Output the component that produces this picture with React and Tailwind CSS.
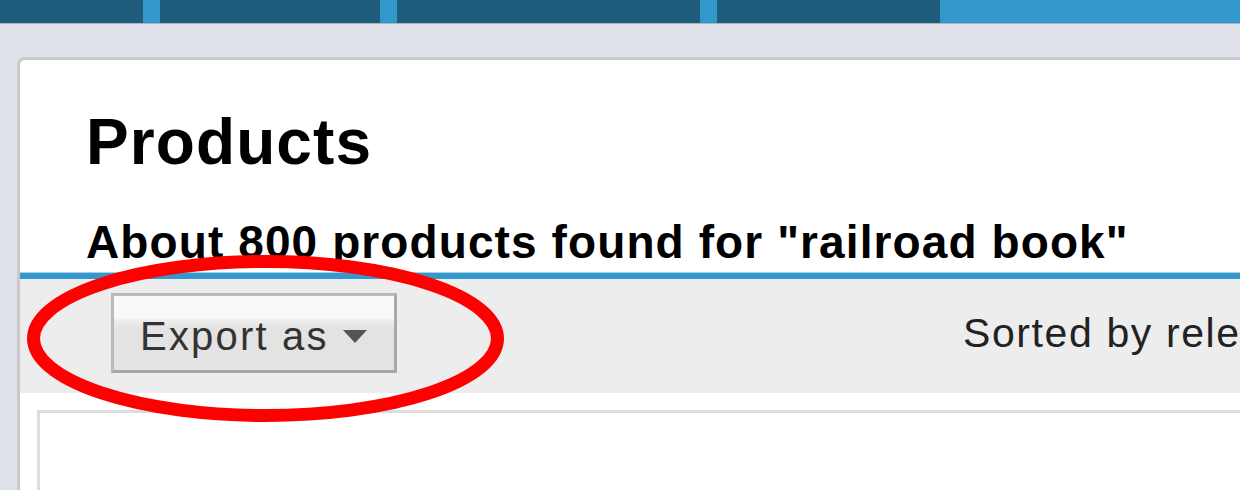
export default function App() {
  return (
    <div className="relative w-[1240px] h-[490px] overflow-hidden bg-[#dfe2ea]" style={{ fontFamily: '"Liberation Sans", Arial, sans-serif' }}>
      <div className="flex h-[24px] border-b border-[#a7b6c4] bg-[#3399cc]">
        <div className="w-[143px] bg-[#1f5b7a]" />
        <div className="w-[17px]" />
        <div className="w-[220px] bg-[#1f5b7a]" />
        <div className="w-[17px]" />
        <div className="w-[303px] bg-[#1f5b7a]" />
        <div className="w-[17px]" />
        <div className="w-[223px] bg-[#1f5b7a]" />
      </div>
      <div className="pt-[33px] pl-[17px]">
        <div className="w-[1400px] h-[500px] bg-white border-t-[3px] border-l-[3px] border-[#c9c9c9] rounded-tl-[8px]">
          <div className="pl-[66px] pt-[50px]">
            <h1 className="text-[64px] leading-none font-bold text-black tracking-[1.1px]">Products</h1>
            <p className="mt-[45px] text-[46px] leading-none font-bold text-black tracking-[1.1px] whitespace-nowrap">About 800 products found for "railroad book"</p>
          </div>
          <div className="mt-[7px] h-px bg-[#a9cfe4]" />
          <div className="flex items-start h-[120px] border-t-[6px] border-[#3399cc] bg-[#ededed]">
            <button className="mt-[14px] ml-[91px] flex items-center w-[286px] h-[80px] border-[3px] border-[#bababa] border-r-[#a9a9a9] border-b-[#a6a6a6] bg-[linear-gradient(to_bottom,#f9f9f9_0px,#f9f9f9_22px,#eeeeee_24px,#e3e3e3_32px,#e3e3e3_100%)] pl-[26px] text-[40px] text-[#333] leading-none">
              <span className="pt-[6px] tracking-[2.2px] whitespace-nowrap">Export as</span>
              <svg width="24" height="13" viewBox="0 0 24 13" className="ml-[14px] mt-[6px] shrink-0">
                <polygon points="0,0 24,0 12,13" fill="#555" />
              </svg>
            </button>
            <span className="mt-[34px] ml-[566px] text-[41px] leading-none text-[#222] whitespace-nowrap tracking-[1.6px]">Sorted by relevance</span>
          </div>
          <div className="pt-[17px] pl-[17px]">
            <div className="w-[1300px] h-[200px] border-t-[3px] border-l-[3px] border-[#dddddd] bg-white" />
          </div>
        </div>
      </div>
      <svg className="absolute left-0 top-0 pointer-events-none" width="1240" height="490">
        <ellipse cx="265.5" cy="338.5" rx="232" ry="77" fill="none" stroke="#ff0000" strokeWidth="13" />
      </svg>
    </div>
  );
}
